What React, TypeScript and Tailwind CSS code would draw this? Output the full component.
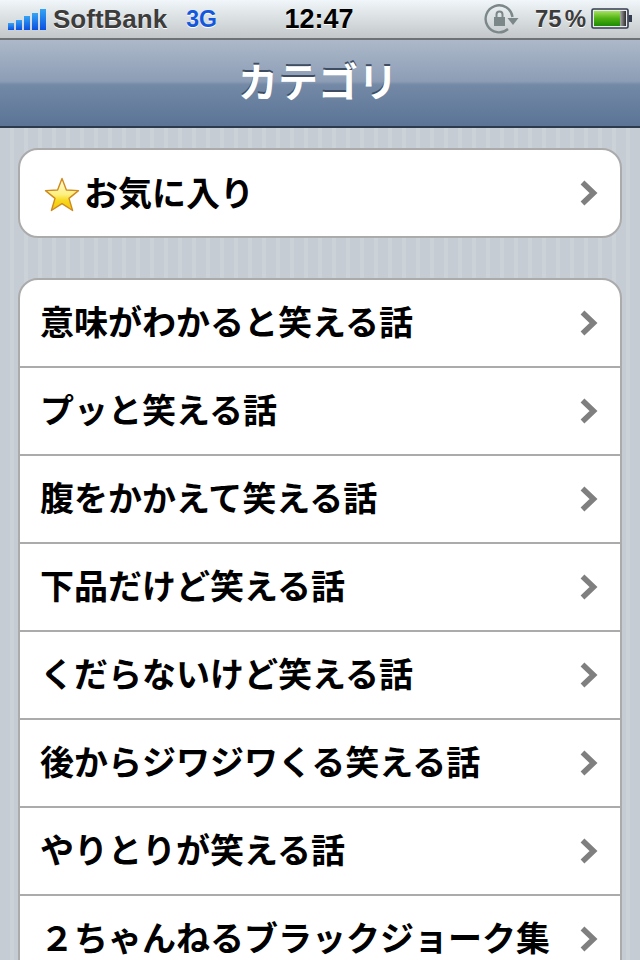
const categories = [
  "意味がわかると笑える話",
  "プッと笑える話",
  "腹をかかえて笑える話",
  "下品だけど笑える話",
  "くだらないけど笑える話",
  "後からジワジワくる笑える話",
  "やりとりが笑える話",
  "２ちゃんねるブラックジョーク集",
];

const jpFont = "font-['Noto_Sans_CJK_JP','Liberation_Sans',sans-serif]";

function Chevron() {
  return (
    <svg width="20" height="28" viewBox="0 0 20 28" className="shrink-0">
      <path d="M3.5 3.5 L14.5 14 L3.5 24.5" fill="none" stroke="#7f7f7f" strokeWidth="5.5" strokeLinejoin="miter" />
    </svg>
  );
}

function Signal() {
  const bars = [7, 10, 14, 17, 21];
  return (
    <div className="flex items-end gap-[2px] h-[21px]">
      {bars.map((h, i) => (
        <svg key={i} width="6" height={h} className="block">
          <defs>
            <linearGradient id={"sig" + i} x1="0" y1="0" x2="0" y2="1">
              <stop offset="0" stopColor="#35a4f4" />
              <stop offset="1" stopColor="#0a4fe0" />
            </linearGradient>
          </defs>
          <rect width="6" height={h} fill={"url(#sig" + i + ")"} />
        </svg>
      ))}
    </div>
  );
}

function RotationLock() {
  return (
    <svg width="36" height="32" viewBox="0 0 36 32">
      <path d="M24 26 A13.5 13.5 0 1 1 28.5 14" fill="none" stroke="#7c8789" strokeWidth="2.4" />
      <path d="M23.5 15 L34.5 15 L29 22 Z" fill="#7c8789" />
      <rect x="10" y="14" width="11" height="9" fill="#7c8789" />
      <path d="M12.5 14 V11.5 A3 3 0 0 1 18.5 11.5 V14" fill="none" stroke="#7c8789" strokeWidth="2" />
    </svg>
  );
}

function Battery() {
  return (
    <svg width="42" height="22" viewBox="0 0 42 22">
      <defs>
        <linearGradient id="batt" x1="0" y1="0" x2="0" y2="1">
          <stop offset="0" stopColor="#a6e060" />
          <stop offset="0.5" stopColor="#4fb212" />
          <stop offset="1" stopColor="#1c8a05" />
        </linearGradient>
        <linearGradient id="battEmpty" x1="0" y1="0" x2="1" y2="0">
          <stop offset="0" stopColor="#a8a8a8" />
          <stop offset="1" stopColor="#2c2c2c" />
        </linearGradient>
      </defs>
      <rect x="1" y="1" width="36" height="19" rx="1.5" fill="#e8ebec" stroke="#343c50" strokeWidth="1.6" />
      <rect x="3" y="3" width="26" height="15" fill="url(#batt)" />
      <rect x="29" y="3" width="6" height="15" fill="url(#battEmpty)" />
      <rect x="37.5" y="7" width="3.5" height="7" fill="#343c50" />
    </svg>
  );
}

function StatusBar() {
  return (
    <div className="h-10 border-b-2 border-[#6f7274] bg-gradient-to-b from-[#f0f6f9] to-[#c3c7c9] grid grid-cols-[1fr_auto_1fr] items-center font-['Liberation_Sans',sans-serif] font-bold">
      <div className="flex items-center pl-2">
        <Signal />
        <span className="ml-[7px] text-[26px] leading-none text-[#3c3c3c] [text-shadow:0_1px_0_#fff]">SoftBank</span>
        <span className="ml-[19px] text-[23px] leading-none text-[#1358dc] [text-shadow:0_1px_0_#fff]">3G</span>
      </div>
      <span className="text-[27px] leading-none text-black [text-shadow:0_1px_0_#fff] mr-[2px]">12:47</span>
      <div className="flex items-center justify-end pr-[7px]">
        <RotationLock />
        <span className="ml-[15px] text-[24px] leading-none text-[#3c3c3c] [text-shadow:0_1px_0_#fff] flex gap-[3px]">
          <span>75</span>
          <span>%</span>
        </span>
        <div className="ml-[5px] flex">
          <Battery />
        </div>
      </div>
    </div>
  );
}

function NavBar() {
  return (
    <div className="h-[88px] border-b-2 border-[#2d3a4d] bg-[linear-gradient(to_bottom,#adb9ca_0%,#8c9db5_48%,#7389a6_52%,#5b7496_100%)] flex items-center justify-center">
      <h1 className={`${jpFont} font-bold text-[40px] leading-none text-white [text-shadow:0_-2px_0_#3f4d62] -mt-[6px] mr-1`}>
        カテゴリ
      </h1>
    </div>
  );
}

function Row({ children }: { children: React.ReactNode }) {
  return (
    <div className="h-[88px] flex items-center justify-between pl-5 pr-[21px] border-b-2 border-[#ababab]">
      {children}
    </div>
  );
}

function Star() {
  return (
    <svg width="36" height="36" viewBox="0 0 36 36" className="shrink-0 mt-1 -ml-[1px]">
      <defs>
        <linearGradient id="star" x1="0" y1="0" x2="0" y2="1">
          <stop offset="0" stopColor="#fffbe0" />
          <stop offset="0.5" stopColor="#fdf080" />
          <stop offset="0.7" stopColor="#f7d81a" />
          <stop offset="1" stopColor="#f2c40c" />
        </linearGradient>
      </defs>
      <path
        d="M18 1.5 L22.4 13 L34.5 13.6 L25 21.4 L28.6 33.5 L18 26.6 L7.4 33.5 L11 21.4 L1.5 13.6 L13.6 13 Z"
        fill="url(#star)"
        stroke="#cf8a1e"
        strokeWidth="1.4"
        strokeLinejoin="round"
      />
    </svg>
  );
}

export default function App() {
  return (
    <div className={`h-[960px] overflow-hidden ${jpFont} bg-[repeating-linear-gradient(to_right,#c5ccd4_0px,#c5ccd4_10px,#cbd2d8_10px,#cbd2d8_14px)]`}>
      <StatusBar />
      <NavBar />
      <div className="px-[18px] pt-5">
        <div className="bg-white border-2 border-[#ababab] rounded-[20px] overflow-hidden h-[90px]">
          <div className="h-[86px] flex items-center justify-between pl-[25px] pr-[21px]">
            <div className="flex items-center">
              <Star />
              <span className="font-bold text-[34px] leading-none text-black -mt-[2px] ml-[4px]">お気に入り</span>
            </div>
            <Chevron />
          </div>
        </div>
        <div className="mt-10 bg-white border-2 border-[#ababab] rounded-[20px] overflow-hidden">
          {categories.map((c) => (
            <Row key={c}>
              <span className="font-bold text-[34px] leading-none text-black whitespace-nowrap -mt-1">{c}</span>
              <Chevron />
            </Row>
          ))}
        </div>
      </div>
    </div>
  );
}
